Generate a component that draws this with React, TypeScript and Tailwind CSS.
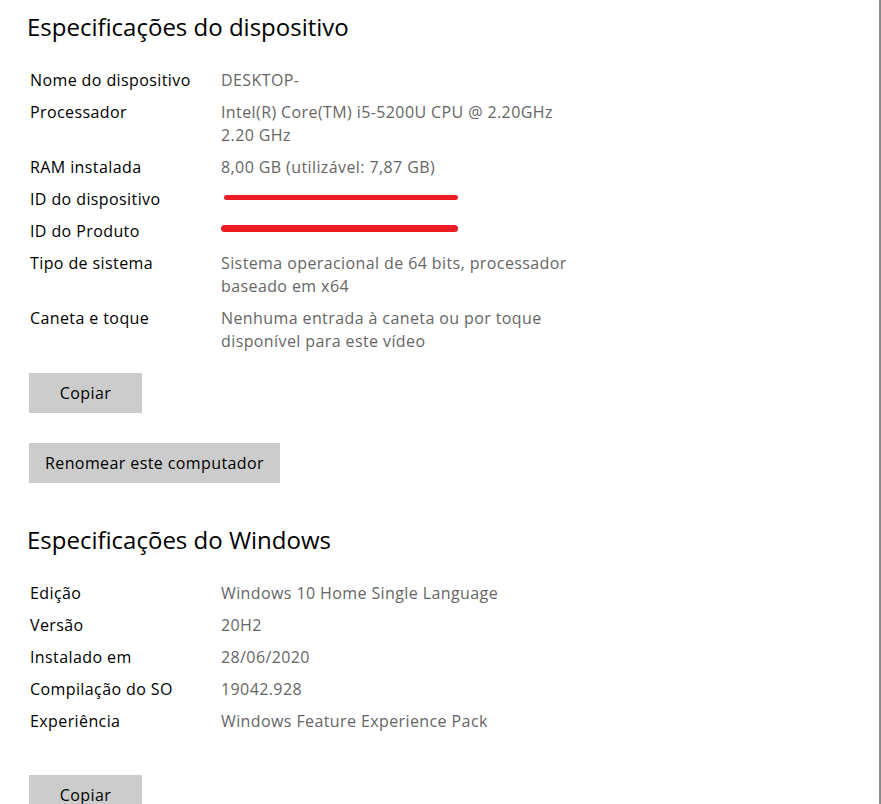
const deviceSpecs: { label: string; value?: string[]; redact?: "a" | "b" }[] = [
  { label: "Nome do dispositivo", value: ["DESKTOP-"] },
  { label: "Processador", value: ["Intel(R) Core(TM) i5-5200U CPU @ 2.20GHz", "2.20 GHz"] },
  { label: "RAM instalada", value: ["8,00 GB (utilizável: 7,87 GB)"] },
  { label: "ID do dispositivo", redact: "a" },
  { label: "ID do Produto", redact: "b" },
  { label: "Tipo de sistema", value: ["Sistema operacional de 64 bits, processador", "baseado em x64"] },
  { label: "Caneta e toque", value: ["Nenhuma entrada à caneta ou por toque", "disponível para este vídeo"] },
];

const windowsSpecs = [
  { label: "Edição", value: ["Windows 10 Home Single Language"] },
  { label: "Versão", value: ["20H2"] },
  { label: "Instalado em", value: ["28/06/2020"] },
  { label: "Compilação do SO", value: ["19042.928"] },
  { label: "Experiência", value: ["Windows Feature Experience Pack"] },
];

function SpecRows({ rows }: { rows: { label: string; value?: string[]; redact?: "a" | "b" }[] }) {
  return (
    <div className="flex flex-col gap-[9px] pl-[3px]">
      {rows.map((row) => (
        <div key={row.label} className="grid grid-cols-[191px_1fr] text-[16px] leading-[23px] tracking-[0.4px]">
          <span className="text-black">{row.label}</span>
          <div className="text-[#666666]">
            {row.value?.map((line) => (
              <div key={line}>{line}</div>
            ))}
            {/* redaction marks drawn over the IDs */}
            {row.redact === "a" && (
              <div className="mt-[7px] ml-[3px] h-[5px] w-[234px] rounded-full bg-[#ed1c24]" />
            )}
            {row.redact === "b" && (
              <div className="mt-[5px] h-[7px] w-[237px] rounded-full bg-[#ed1c24]" />
            )}
          </div>
        </div>
      ))}
    </div>
  );
}

function Button({ children }: { children: React.ReactNode }) {
  return (
    <button className="h-10 min-w-[113px] bg-[#cccccc] px-4 text-[16px] tracking-[0.4px] text-black">
      {children}
    </button>
  );
}

export default function App() {
  return (
    <div className="min-h-screen w-full bg-white border-r-2 border-[#8a8a8a] pl-[27px] pt-[11px] font-['Open_Sans',sans-serif]">
      <h2 className="text-[24px] leading-8 text-black">Especificações do dispositivo</h2>
      <div className="mt-[26px]">
        <SpecRows rows={deviceSpecs} />
      </div>
      <div className="mt-[20px] flex flex-col items-start gap-[30px] pl-[2px]">
        <Button>Copiar</Button>
        <Button>Renomear este computador</Button>
      </div>

      <h2 className="mt-[41px] text-[24px] leading-8 text-black">Especificações do Windows</h2>
      <div className="mt-[26px]">
        <SpecRows rows={windowsSpecs} />
      </div>
      <div className="mt-[42px] pl-[2px]">
        <Button>Copiar</Button>
      </div>
    </div>
  );
}
